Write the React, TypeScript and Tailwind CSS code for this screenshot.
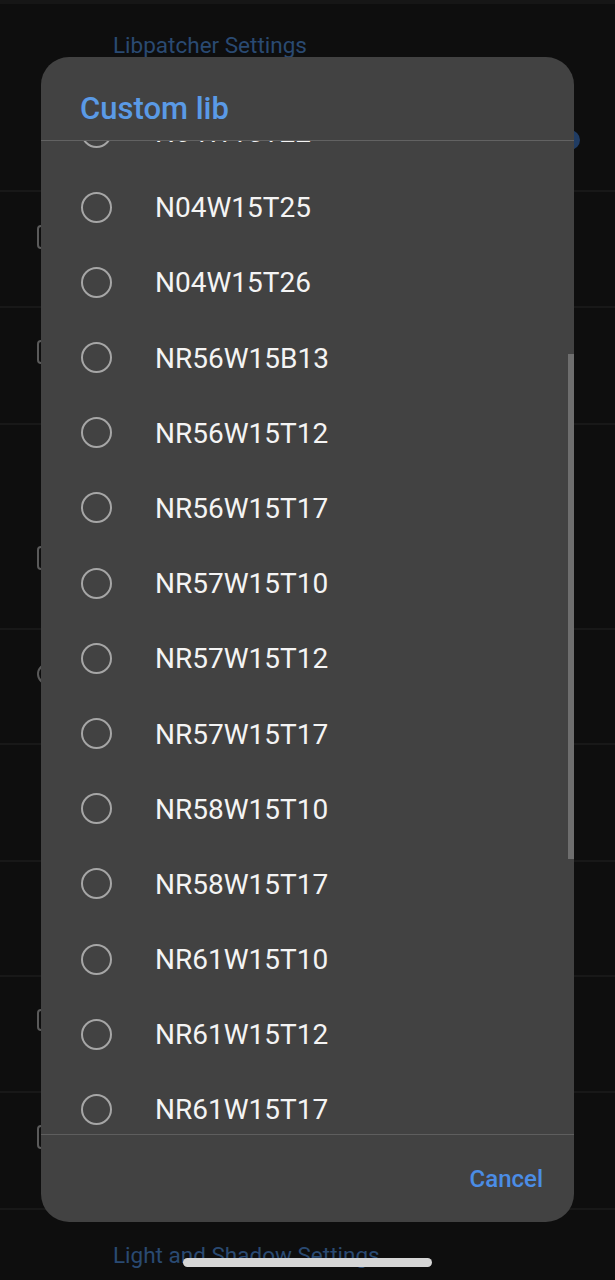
import React from 'react';

const libs = [
  'N04W15T22',
  'N04W15T25',
  'N04W15T26',
  'NR56W15B13',
  'NR56W15T12',
  'NR56W15T17',
  'NR57W15T10',
  'NR57W15T12',
  'NR57W15T17',
  'NR58W15T10',
  'NR58W15T17',
  'NR61W15T10',
  'NR61W15T12',
  'NR61W15T17',
  'NR62W15T10',
];

// rows of the settings screen behind the dialog (only edges show)
const bgRows = [
  { h: 'h-[116px]', icon: 'mt-[33px] h-[24px]' },
  { h: 'h-[117px]', icon: 'mt-[32px] h-[24px]' },
  { h: 'h-[205px]', icon: 'mt-[121px] h-[24px]' },
  { h: 'h-[115px]', icon: 'mt-[33px] h-[22px] rounded-full' },
  { h: 'h-[117px]', icon: '' },
  { h: 'h-[115px]', icon: '' },
  { h: 'h-[116px]', icon: 'mt-[32px] h-[22px]' },
  { h: 'h-[117px]', icon: 'mt-[32px] h-[24px]' },
];

const Radio: React.FC = () => (
  <span className="w-[31px] h-[31px] rounded-full border-[2.5px] border-[#a6a6a6] shrink-0" />
);

const App: React.FC = () => {
  return (
    <div className="relative w-[615px] h-[1280px] overflow-hidden bg-[#0e0e0e] font-['Roboto',sans-serif]">
      {/* background settings screen, dimmed */}
      <div className="h-[4px] bg-[#161616]" />
      <div className="h-[86px] pl-[113px] pt-[28px]">
        <p className="text-[22.5px] leading-[26px] text-[#2a4a72]">Libpatcher Settings</p>
      </div>
      <div className="h-[102px] flex items-center justify-end pr-[35px] border-b-2 border-[#181818]">
        <span className="w-[20px] h-[20px] rounded-full bg-[#203c63]" />
      </div>
      {bgRows.map((r, i) => (
        <div key={i} className={`${r.h} flex items-start pl-[37px] border-b-2 border-[#181818]`}>
          {r.icon && (
            <span className={`${r.icon} w-[22px] border-2 border-[#5a5a5a] rounded-[4px]`} />
          )}
        </div>
      ))}
      <div className="pl-[113px] pt-[32px]">
        <p className="text-[22.5px] leading-[26px] text-[#2a4a72]">Light and Shadow Settings</p>
      </div>

      {/* dialog */}
      <div className="absolute left-[41px] top-[57px] w-[533px] h-[1165px] rounded-[28px] bg-[#424242] flex flex-col overflow-hidden">
        <div className="h-[84px] shrink-0 pl-[39px] pt-[37px] border-b border-[#626262]">
          <h2 className="text-[31px] leading-[30px] font-medium text-[#5a9ae6]">Custom lib</h2>
        </div>
        <div className="relative flex-1 overflow-hidden">
          <ul className="-mt-[46.6px]">
            {libs.map((name) => (
              <li key={name} className="h-[75.2px] flex items-center pl-[40px]">
                <Radio />
                <span className="ml-[43px] mt-[2px] text-[28px] leading-none text-[#f4f4f4]">{name}</span>
              </li>
            ))}
          </ul>
          <div className="absolute right-0 top-[213px] w-[6px] h-[505px] bg-[#6e6e6e]" />
        </div>
        <div className="h-[88px] shrink-0 border-t border-[#5e5e5e] flex items-center justify-end pr-[31px]">
          <button className="text-[24px] leading-none font-medium text-[#4b8de6]">Cancel</button>
        </div>
      </div>

      {/* home indicator */}
      <div className="absolute left-[183px] top-[1258px] w-[249px] h-[9px] rounded-full bg-[#d6d6d6]" />
    </div>
  );
};

export default App;
